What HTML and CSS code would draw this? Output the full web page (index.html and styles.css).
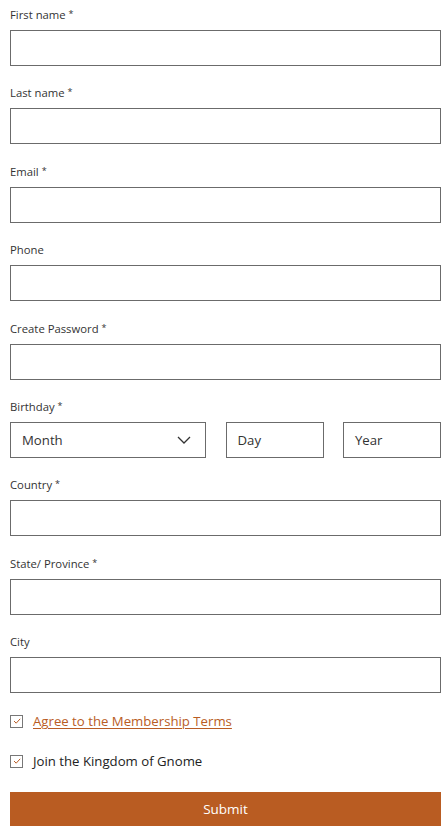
FILE: index.html
```html
<!DOCTYPE html>
<html>
<head>
<meta charset="utf-8">
<link rel="stylesheet" href="styles.css">
</head>
<body>
<form class="form">
  <div class="field">
    <label class="label">First name <span class="req">*</span></label>
    <div class="input"></div>
  </div>
  <div class="field">
    <label class="label">Last name <span class="req">*</span></label>
    <div class="input"></div>
  </div>
  <div class="field">
    <label class="label">Email <span class="req">*</span></label>
    <div class="input"></div>
  </div>
  <div class="field">
    <label class="label">Phone</label>
    <div class="input"></div>
  </div>
  <div class="field">
    <label class="label">Create Password <span class="req">*</span></label>
    <div class="input"></div>
  </div>
  <div class="field">
    <label class="label">Birthday <span class="req">*</span></label>
    <div class="birthday">
      <div class="input select"><span>Month</span>
        <svg class="chev" width="14" height="8" viewBox="0 0 14 8"><path d="M1 1 L7 7 L13 1" fill="none" stroke="#333" stroke-width="1.3"/></svg>
      </div>
      <div class="input"><span>Day</span></div>
      <div class="input"><span>Year</span></div>
    </div>
  </div>
  <div class="field">
    <label class="label">Country <span class="req">*</span></label>
    <div class="input"></div>
  </div>
  <div class="field">
    <label class="label">State/ Province <span class="req">*</span></label>
    <div class="input"></div>
  </div>
  <div class="field">
    <label class="label">City</label>
    <div class="input"></div>
  </div>
  <div class="checks">
    <div class="check">
      <span class="box"><svg width="10" height="10" viewBox="0 0 10 10"><path d="M2 5 L4.2 7.2 L8.2 2.8" fill="none" stroke="#B95C24" stroke-width="1"/></svg></span>
      <a class="link">Agree to the Membership Terms</a>
    </div>
    <div class="check">
      <span class="box"><svg width="10" height="10" viewBox="0 0 10 10"><path d="M2 5 L4.2 7.2 L8.2 2.8" fill="none" stroke="#B95C24" stroke-width="1"/></svg></span>
      <span class="ctext">Join the Kingdom of Gnome</span>
    </div>
  </div>
  <div class="submit">Submit</div>
</form>
</body>
</html>
```
FILE: styles.css
```css
* { box-sizing: border-box; }
body {
  margin: 0;
  padding: 6px 6px 0 10px;
  font-family: "Open Sans", "Noto Sans", Arial, sans-serif;
  color: #333;
  background: #fff;
}
.form {
  display: flex;
  flex-direction: column;
  gap: 18.4px;
}
.field {
  display: flex;
  flex-direction: column;
}
.label {
  font-size: 11.3px;
  line-height: 16px;
  height: 17px;
  padding-top: 1px;
  margin-bottom: 7px;
  color: #333;
}
.req {
  font-size: 9px;
  vertical-align: 2px;
  line-height: 0;
}
.input {
  height: 36px;
  border: 1px solid #6b6b6b;
  display: flex;
  align-items: center;
  padding: 0 11px;
  font-size: 13.2px;
  color: #333;
}
.birthday {
  display: grid;
  grid-template-columns: 2fr 1fr 1fr;
  column-gap: 19.5px;
}
.select {
  justify-content: space-between;
  padding-right: 14px;
}
.checks {
  display: flex;
  flex-direction: column;
  gap: 20px;
  margin-top: -0.4px;
}
.check {
  display: flex;
  align-items: center;
  height: 20px;
  font-size: 13.2px;
}
.box {
  width: 13px;
  height: 13px;
  border: 1px solid #777;
  display: flex;
  align-items: center;
  justify-content: center;
  margin-right: 10px;
}
.link {
  color: #B95C24;
  text-decoration: underline;
  text-underline-offset: 2px;
}
.ctext { color: #222; }
.submit {
  height: 34px;
  margin-top: 2.6px;
  background: #B95C22;
  color: #fff;
  font-size: 13.5px;
  display: flex;
  align-items: center;
  justify-content: center;
}
```
